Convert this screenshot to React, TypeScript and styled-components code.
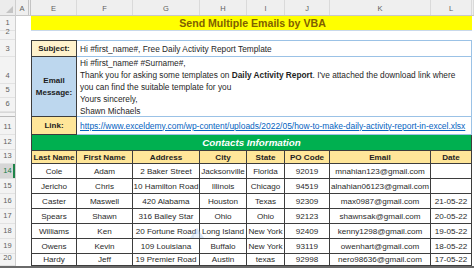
import styled, { createGlobalStyle } from "styled-components";

const GlobalStyle = createGlobalStyle`
  html, body { margin: 0; padding: 0; background: #ffffff; }
  body { font-family: "Liberation Sans", Arial, sans-serif; color: #1f1f1f; }
  *, *::before, *::after { box-sizing: border-box; }
`;

const Window = styled.div`
  width: 474px;
  height: 268px;
  overflow: hidden;
  display: flex;
  flex-direction: column;
  background: #ffffff;
`;

const Sheet = styled.div`
  flex: 1;
  min-height: 0;
  display: flex;
  overflow: hidden;
`;

const RowHeads = styled.div`
  width: 16px;
  flex-shrink: 0;
  display: flex;
  flex-direction: column;
  background: #f3f3f3;
  border-right: 1px solid #cfcfcf;
`;

const Corner = styled.div`
  height: 16px;
  flex-shrink: 0;
  position: relative;
  background: #ececec;
  border-bottom: 1px solid #c8c8c8;

  &::after {
    content: "";
    position: absolute;
    right: 2px;
    bottom: 2px;
    border-left: 7px solid transparent;
    border-bottom: 7px solid #c4c4c4;
  }
`;

const RowNum = styled.div<{ $h: number; $sel?: boolean }>`
  height: ${(p) => p.$h}px;
  flex-shrink: 0;
  display: flex;
  align-items: flex-end;
  justify-content: center;
  padding-bottom: 2px;
  font-size: 7.5px;
  line-height: 10px;
  color: ${(p) => (p.$sel ? "#137a3f" : "#5f5f5f")};
  background: ${(p) => (p.$sel ? "#d6d6d6" : "transparent")};
  box-shadow: ${(p) => (p.$sel ? "inset -2px 0 0 #1e8449" : "none")};
  border-bottom: 1px solid #e2e2e2;
`;

const HiddenRows = styled.div`
  height: 5px;
  flex-shrink: 0;
  border-bottom: 1px solid #b9b9b9;
  border-top: 1px solid #d8d8d8;
`;

const Main = styled.div`
  flex: 1;
  display: flex;
  flex-direction: column;
  min-width: 0;
`;

const ColHeads = styled.div`
  height: 16px;
  flex-shrink: 0;
  display: grid;
  grid-template-columns: 15px 46px 56px 67px 47px 38px 45px 101px 41px 1fr;
  background: #efefef;
  border-bottom: 1px solid #c8c8c8;
`;

const ColLetter = styled.div<{ $split?: boolean }>`
  display: flex;
  align-items: center;
  justify-content: center;
  padding-top: 2px;
  font-size: 7.5px;
  color: #5f5f5f;
  border-right: ${(p) => (p.$split ? "3px double #c4c4c4" : "1px solid #dadada")};
`;

const Body = styled.div`
  flex: 1;
  display: flex;
`;

const ColA = styled.div`
  width: 15px;
  flex-shrink: 0;
`;

const Content = styled.div`
  width: 441px;
  flex-shrink: 0;
  display: flex;
  flex-direction: column;
  position: relative;
`;

const Title = styled.div`
  height: 15px;
  margin-bottom: 9px;
  background: #ffff00;
  border-bottom: 1px solid #c9d9ea;
  display: flex;
  align-items: center;
  justify-content: center;
  font-size: 10.6px;
  font-weight: 700;
  color: #7f6000;
  padding-left: 2px;
`;

const Form = styled.div`
  display: grid;
  grid-template-columns: 46px 395px;
  grid-template-rows: 17px 60px 18px;
`;

const Label = styled.div<{ $bg: string; $first?: boolean }>`
  background: ${(p) => p.$bg};
  border: 1px solid #3d3d3d;
  border-top: ${(p) => (p.$first ? "1px solid #3d3d3d" : "none")};
  display: flex;
  flex-direction: column;
  align-items: center;
  justify-content: center;
  font-size: 8px;
  font-weight: 700;
  line-height: 12px;
  color: #1b1b1b;
`;

const TextCell = styled.div<{ $first?: boolean }>`
  border: 1px solid #9bc2e6;
  border-left: none;
  border-top: ${(p) => (p.$first ? "1px solid #9bc2e6" : "none")};
  display: flex;
  align-items: center;
  padding-left: 3px;
  font-size: 8.3px;
  white-space: nowrap;
  overflow: hidden;
`;

const MessageCell = styled(TextCell)`
  flex-direction: column;
  align-items: flex-start;
  justify-content: flex-start;
  line-height: 12px;
  padding-top: 0;
`;

const Link = styled.span`
  color: #0563c1;
  text-decoration: underline;
  font-size: 8.45px;
`;

const Band = styled.div`
  height: 15px;
  background: #00b050;
  border-left: 1px solid #3d3d3d;
  border-right: 1px solid #3d3d3d;
  display: flex;
  align-items: center;
  justify-content: center;
  color: #ffffff;
  font-size: 9.8px;
  font-weight: 700;
  font-style: italic;
`;

const Table = styled.div`
  display: grid;
  grid-template-columns: 45px 56px 67px 47px 38px 45px 101px 41px;
  grid-template-rows: 13px repeat(6, 15px) 12px;
  border-left: 1px solid #3d3d3d;
  border-top: 1px solid #3d3d3d;
`;

const HeadCell = styled.div`
  background: #ffe699;
  border-right: 1px solid #3d3d3d;
  border-bottom: 1px solid #3d3d3d;
  display: flex;
  align-items: center;
  justify-content: center;
  font-size: 8.1px;
  font-weight: 700;
  white-space: nowrap;
`;

const DataCell = styled.div`
  background: #ffffff;
  border-right: 1px solid #3d3d3d;
  border-bottom: 1px solid #3d3d3d;
  display: flex;
  align-items: center;
  justify-content: center;
  font-size: 8.1px;
  color: #2a2a2a;
  white-space: nowrap;
`;

const Watermark = styled.svg`
  position: absolute;
  left: 157px;
  top: 210px;
  opacity: 0.35;
`;

const BottomBar = styled.div`
  height: 2px;
  flex-shrink: 0;
  background: #6a6a6a;
`;

const LETTERS = ["A", "E", "F", "G", "H", "I", "J", "K", "L", ""];

const TOP_ROWS = [
  { n: "1", h: 15 },
  { n: "2", h: 9 },
  { n: "3", h: 17 },
  { n: "4", h: 27 },
  { n: "5", h: 14 },
  { n: "6", h: 14 },
];

const BOTTOM_ROWS = [
  { n: "11", h: 18 },
  { n: "12", h: 15 },
  { n: "13", h: 14 },
  { n: "14", h: 15, sel: true },
  { n: "15", h: 15 },
  { n: "16", h: 15 },
  { n: "17", h: 15 },
  { n: "18", h: 15 },
  { n: "19", h: 15 },
  { n: "20", h: 12 },
];

const HEADERS = ["Last Name", "First Name", "Address", "City", "State", "PO Code", "Email", "Date"];

const CONTACTS = [
  ["Cole", "Adam", "2 Baker Street", "Jacksonville", "Florida", "92019", "mnahian123@gmail.com", ""],
  ["Jericho", "Chris", "10 Hamilton Road", "Illinois", "Chicago", "94519", "alnahian06123@gmail.com", ""],
  ["Caster", "Maswell", "420 Alabama", "Houston", "Texas", "92309", "max0987@gmail.com", "21-05-22"],
  ["Spears", "Shawn", "316 Bailey Star", "Ohio", "Ohio", "92123", "shawnsak@gmail.com", "20-05-22"],
  ["Williams", "Ken", "20 Fortune Road", "Long Island", "New York", "92409", "kenny1298@gmail.com", "19-05-22"],
  ["Owens", "Kevin", "109 Louisiana", "Buffalo", "New York", "93119", "owenhart@gmail.com", "18-05-22"],
  ["Hardy", "Jeff", "19 Premier Road", "Austin", "texas", "92998", "nero98636@gmail.com", "17-05-22"],
];

export default function App() {
  return (
    <>
      <GlobalStyle />
      <Window>
        <Sheet>
          <RowHeads>
            <Corner />
            {TOP_ROWS.map((r) => (
              <RowNum key={r.n} $h={r.h}>{r.n}</RowNum>
            ))}
            <HiddenRows />
            {BOTTOM_ROWS.map((r) => (
              <RowNum key={r.n} $h={r.h} $sel={r.sel}>{r.n}</RowNum>
            ))}
          </RowHeads>
          <Main>
            <ColHeads>
              {LETTERS.map((l, i) => (
                <ColLetter key={i} $split={l === "A"}>{l}</ColLetter>
              ))}
            </ColHeads>
            <Body>
              <ColA />
              <Content>
                <Title>Send Multiple Emails by VBA</Title>
                <Form>
                  <Label $bg="#fff2cc" $first>Subject:</Label>
                  <TextCell $first>Hi #first_name#, Free Daily Activity Report Template</TextCell>
                  <Label $bg="#bdd7ee">
                    <span>Email</span>
                    <span>Message:</span>
                  </Label>
                  <MessageCell>
                    <span>Hi #first_name# #Surname#,</span>
                    <span>
                      Thank you for asking some templates on <b>Daily Activity Report</b>. I've attached the download link where
                    </span>
                    <span>you can find the suitable template for you</span>
                    <span>Yours sincerely,</span>
                    <span>Shawn Michaels</span>
                  </MessageCell>
                  <Label $bg="#ffe699">Link:</Label>
                  <TextCell>
                    <Link>https://www.exceldemy.com/wp-content/uploads/2022/05/how-to-make-daily-activity-report-in-excel.xlsx</Link>
                  </TextCell>
                </Form>
                <Band>Contacts Information</Band>
                <Table>
                  {HEADERS.map((h) => (
                    <HeadCell key={h}>{h}</HeadCell>
                  ))}
                  {CONTACTS.map((row, r) =>
                    row.map((v, c) => <DataCell key={`${r}-${c}`}>{v}</DataCell>)
                  )}
                </Table>
                <Watermark width="18" height="14" viewBox="0 0 18 14">
                  <path d="M2 12 L9 2 L16 12 Z" fill="#8fb4e3" />
                  <rect x="6" y="8" width="6" height="4" fill="#c7dcf3" />
                </Watermark>
              </Content>
            </Body>
          </Main>
        </Sheet>
        <BottomBar />
      </Window>
    </>
  );
}
